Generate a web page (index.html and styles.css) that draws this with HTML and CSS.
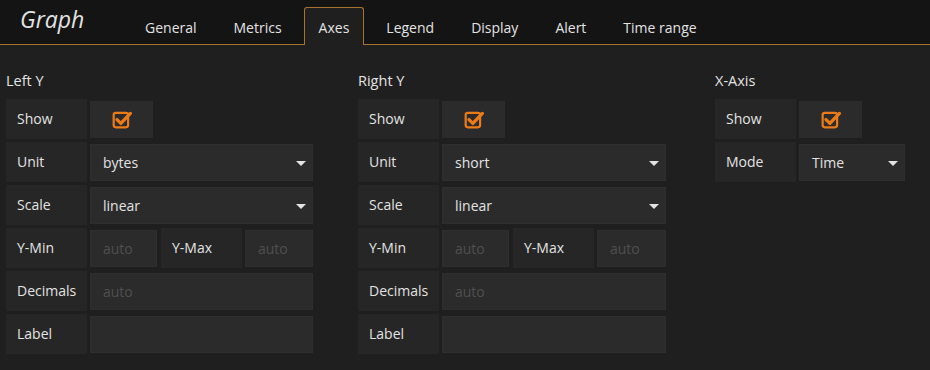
FILE: index.html
```html
<!DOCTYPE html>
<html lang="en">
<head>
  <meta charset="UTF-8" />
  <title>Graph - Axes</title>
  <link rel="stylesheet" href="styles.css">
</head>
<body>
  <div class="header">
    <div class="title">Graph</div>
    <ul class="tabs">
      <li class="tab">General</li>
      <li class="tab">Metrics</li>
      <li class="tab active">Axes</li>
      <li class="tab">Legend</li>
      <li class="tab">Display</li>
      <li class="tab">Alert</li>
      <li class="tab">Time range</li>
    </ul>
  </div>

  <div class="editor">
    <div class="section section-y">
      <h5 class="section-title">Left Y</h5>
      <div class="row">
        <div class="label">Show</div>
        <div class="check-box">
          <svg width="20" height="20" viewBox="0 0 18 18">
            <rect x="1.5" y="3.5" width="13" height="13" rx="2" fill="none" stroke="#eb7b18" stroke-width="2"/>
            <path d="M4.5 9.5 L8 13 L16.5 4" fill="none" stroke="#eb7b18" stroke-width="3" stroke-linecap="round" stroke-linejoin="round"/>
          </svg>
        </div>
      </div>
      <div class="row">
        <div class="label">Unit</div>
        <div class="select wide">bytes<span class="caret"></span></div>
      </div>
      <div class="row">
        <div class="label">Scale</div>
        <div class="select wide">linear<span class="caret"></span></div>
      </div>
      <div class="row">
        <div class="label">Y-Min</div>
        <div class="input small placeholder">auto</div>
        <div class="label second">Y-Max</div>
        <div class="input wide placeholder">auto</div>
      </div>
      <div class="row">
        <div class="label">Decimals</div>
        <div class="input wide placeholder">auto</div>
      </div>
      <div class="row">
        <div class="label">Label</div>
        <div class="input wide"></div>
      </div>
    </div>

    <div class="section section-y right">
      <h5 class="section-title">Right Y</h5>
      <div class="row">
        <div class="label">Show</div>
        <div class="check-box">
          <svg width="20" height="20" viewBox="0 0 18 18">
            <rect x="1.5" y="3.5" width="13" height="13" rx="2" fill="none" stroke="#eb7b18" stroke-width="2"/>
            <path d="M4.5 9.5 L8 13 L16.5 4" fill="none" stroke="#eb7b18" stroke-width="3" stroke-linecap="round" stroke-linejoin="round"/>
          </svg>
        </div>
      </div>
      <div class="row">
        <div class="label">Unit</div>
        <div class="select wide">short<span class="caret"></span></div>
      </div>
      <div class="row">
        <div class="label">Scale</div>
        <div class="select wide">linear<span class="caret"></span></div>
      </div>
      <div class="row">
        <div class="label">Y-Min</div>
        <div class="input small placeholder">auto</div>
        <div class="label second">Y-Max</div>
        <div class="input wide placeholder">auto</div>
      </div>
      <div class="row">
        <div class="label">Decimals</div>
        <div class="input wide placeholder">auto</div>
      </div>
      <div class="row">
        <div class="label">Label</div>
        <div class="input wide"></div>
      </div>
    </div>

    <div class="section">
      <h5 class="section-title">X-Axis</h5>
      <div class="row">
        <div class="label">Show</div>
        <div class="check-box">
          <svg width="20" height="20" viewBox="0 0 18 18">
            <rect x="1.5" y="3.5" width="13" height="13" rx="2" fill="none" stroke="#eb7b18" stroke-width="2"/>
            <path d="M4.5 9.5 L8 13 L16.5 4" fill="none" stroke="#eb7b18" stroke-width="3" stroke-linecap="round" stroke-linejoin="round"/>
          </svg>
        </div>
      </div>
      <div class="row">
        <div class="label">Mode</div>
        <div class="select mode">Time<span class="caret"></span></div>
      </div>
    </div>
  </div>
</body>
</html>
```

FILE: styles.css
```css
body {
  margin: 0;
  background-color: #1f1f1f;
  color: #d8d9da;
  font-family: "Open Sans", "Liberation Sans", sans-serif;
  font-size: 14px;
}

.header {
  display: flex;
  align-items: flex-end;
  height: 44px;
  background-color: #141414;
  border-bottom: 1px solid #a8742c;
}

.title {
  width: 110px;
  padding-left: 20px;
  align-self: flex-start;
  margin-top: 3px;
  font-size: 23px;
  font-style: italic;
  color: #e3e3e3;
}

.tabs {
  display: flex;
  list-style: none;
  margin: 0 0 -1px 0;
  padding: 0;
}

.tab {
  height: 36px;
  line-height: 39px;
  padding: 0 14px;
  margin-right: 7px;
  border: 1px solid transparent;
  border-bottom: none;
  font-size: 14px;
  color: #e3e3e3;
}

.tab.active {
  background-color: #1f1f1f;
  border-color: #a8742c;
  border-radius: 3px 3px 0 0;
  height: 37px;
}

.editor {
  display: flex;
  align-items: flex-start;
  padding: 0 6px;
}

.section {
  display: flex;
  flex-direction: column;
  gap: 3px;
}

.section-y {
  width: 307px;
  margin-right: 45px;
}

.section-y.right {
  width: 308px;
  margin-right: 49px;
}

.section-title {
  margin: 26px 0 6px 0;
  font-size: 14.5px;
  font-weight: normal;
  color: #e3e3e3;
}

.row {
  display: flex;
  align-items: center;
  gap: 3px;
  height: 40px;
}

.label {
  box-sizing: border-box;
  width: 81px;
  height: 40px;
  line-height: 40px;
  padding-left: 11px;
  background-color: #262626;
  color: #e3e3e3;
  flex-shrink: 0;
}

.label.second {
  margin-left: 1px;
}

.check-box {
  display: flex;
  align-items: center;
  justify-content: center;
  width: 63px;
  height: 37px;
  background-color: #2b2b2b;
}

.select,
.input {
  position: relative;
  box-sizing: border-box;
  height: 37px;
  line-height: 36px;
  padding-left: 12px;
  background-color: #2b2b2b;
  border: 1px solid #2e2e2e;
  color: #e3e3e3;
}

.wide {
  flex: 1;
}

.small {
  width: 67px;
  flex-shrink: 0;
}

.mode {
  width: 106px;
}

.placeholder {
  color: #4f4f4f;
}

.caret {
  position: absolute;
  right: 6px;
  top: 16px;
  width: 0;
  height: 0;
  border-left: 5px solid transparent;
  border-right: 5px solid transparent;
  border-top: 5px solid #e3e3e3;
}
```
